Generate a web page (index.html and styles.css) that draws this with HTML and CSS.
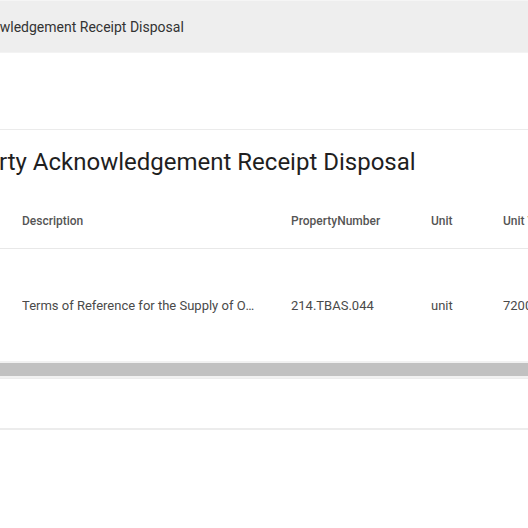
FILE: index.html
```html
<!DOCTYPE html>
<html>
<head>
<meta charset="utf-8">
<link rel="stylesheet" href="styles.css">
</head>
<body>
<div class="page">
  <header class="topbar"><span class="crumb">Property Acknowledgement Receipt Disposal</span></header>
  <div class="spacer"></div>
  <section class="card">
    <h1 class="title">Property Acknowledgement Receipt Disposal</h1>
    <div class="table">
      <div class="row head">
        <div class="c c-desc">Description</div>
        <div class="c c-pn">PropertyNumber</div>
        <div class="c c-unit">Unit</div>
        <div class="c c-uv">Unit Value</div>
      </div>
      <div class="row body">
        <div class="c c-desc"><span class="ellip">Terms of Reference for the Supply of Office Equipment</span></div>
        <div class="c c-pn">214.TBAS.044</div>
        <div class="c c-unit">unit</div>
        <div class="c c-uv">72000.00</div>
      </div>
    </div>
    <div class="hscroll"><div class="thumb"></div></div>
    <div class="footer"></div>
  </section>
</div>
</body>
</html>
```
FILE: styles.css
```css
html, body { margin: 0; padding: 0; background: #fff; overflow: hidden; }
body { font-family: Roboto, "Liberation Sans", sans-serif; color: #333; }
.page { width: 528px; }
.topbar {
  background: #eeeeee;
  border-top: 1px solid #f5f5f5;
  border-bottom: 1px solid #f3f3f3;
  display: flex;
  align-items: center;
  box-sizing: border-box;
  height: 53px;
}
.crumb { font-size: 14px; color: #333; margin-left: -96px; white-space: nowrap; padding-top: 1px; }
.spacer { height: 76px; }
.card { border-top: 1px solid #ebebeb; }
.title {
  margin: 0;
  font-weight: 400;
  font-size: 24px;
  color: #1f1f1f;
  white-space: nowrap;
  margin-left: -64px;
  padding-top: 18px;
  height: 46px;
  line-height: 28px;
}
.row { display: flex; align-items: center; white-space: nowrap; }
.c { flex: none; }
.head { height: 54px; border-bottom: 1px solid #e8e8e8; font-size: 12px; font-weight: 500; color: #555; }
.body { height: 112px; font-size: 13px; color: #4a4a4a; }
.c-desc { margin-left: 22px; width: 269px; }
.c-pn { width: 140px; }
.c-unit { width: 72px; }
.c-uv { width: 100px; }
.ellip { display: inline-block; width: 234px; overflow: hidden; text-overflow: ellipsis; vertical-align: middle; }
.hscroll { height: 17px; background: #f1f1f1; display: flex; align-items: center; border-bottom: 1px solid #ececec; }
.thumb { height: 13px; width: 100%; background: #c1c1c1; }
.footer { height: 49px; border-bottom: 2px solid #ececec; }
```
